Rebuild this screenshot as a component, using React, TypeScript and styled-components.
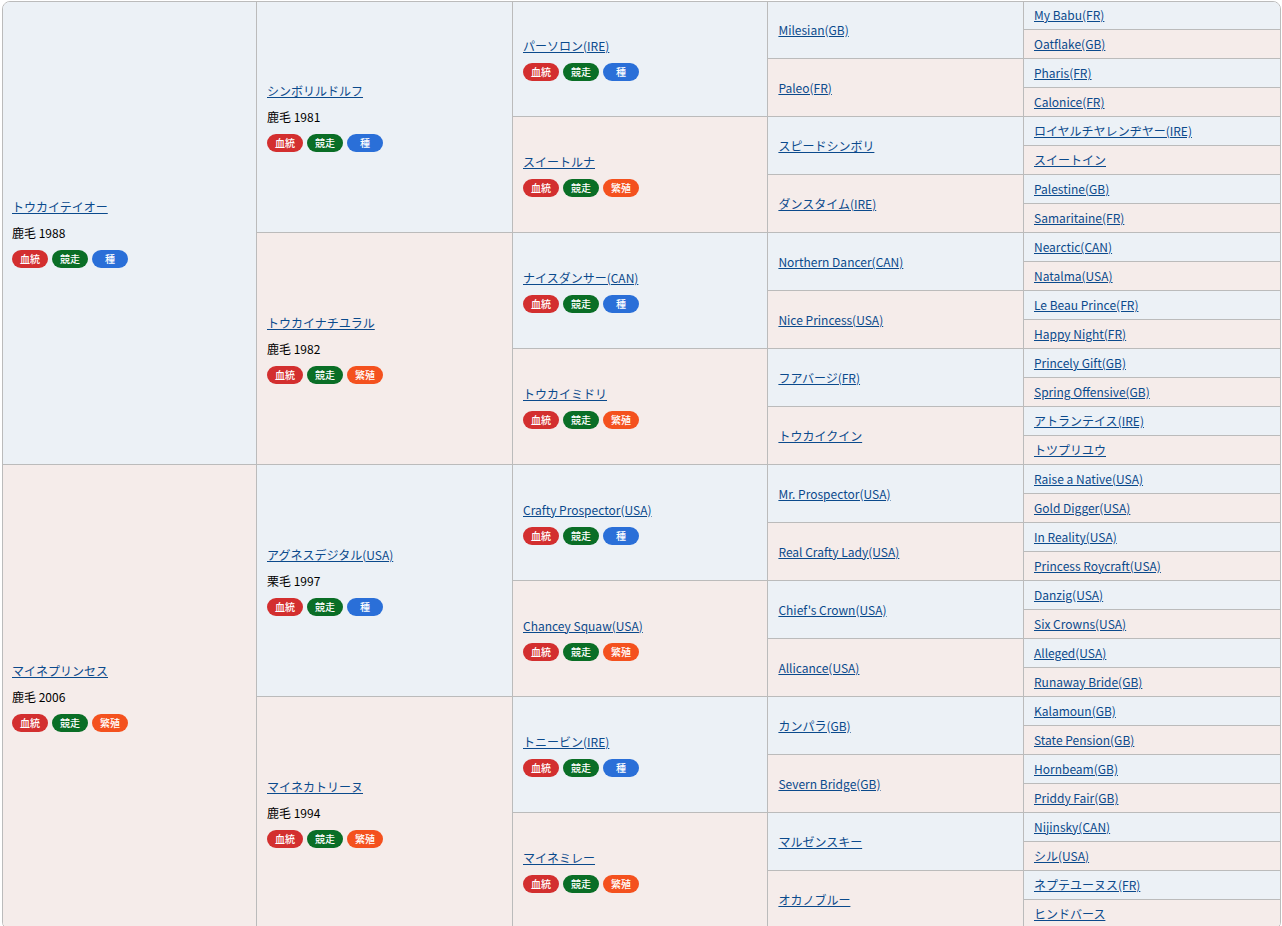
import styled, { createGlobalStyle } from "styled-components";

/* ===========================
   Data
   =========================== */
type Horse = { gen: number; name: string; detail?: string };

const h = (gen: number, name: string, detail?: string): Horse => ({ gen, name, detail });

const HORSES: Horse[] = [
  h(1, "トウカイテイオー", "鹿毛 1988"),
  h(2, "シンボリルドルフ", "鹿毛 1981"),
  h(3, "パーソロン(IRE)"),
  h(4, "Milesian(GB)"),
  h(5, "My Babu(FR)"),
  h(5, "Oatflake(GB)"),
  h(4, "Paleo(FR)"),
  h(5, "Pharis(FR)"),
  h(5, "Calonice(FR)"),
  h(3, "スイートルナ"),
  h(4, "スピードシンボリ"),
  h(5, "ロイヤルチヤレンヂヤー(IRE)"),
  h(5, "スイートイン"),
  h(4, "ダンスタイム(IRE)"),
  h(5, "Palestine(GB)"),
  h(5, "Samaritaine(FR)"),
  h(2, "トウカイナチユラル", "鹿毛 1982"),
  h(3, "ナイスダンサー(CAN)"),
  h(4, "Northern Dancer(CAN)"),
  h(5, "Nearctic(CAN)"),
  h(5, "Natalma(USA)"),
  h(4, "Nice Princess(USA)"),
  h(5, "Le Beau Prince(FR)"),
  h(5, "Happy Night(FR)"),
  h(3, "トウカイミドリ"),
  h(4, "フアバージ(FR)"),
  h(5, "Princely Gift(GB)"),
  h(5, "Spring Offensive(GB)"),
  h(4, "トウカイクイン"),
  h(5, "アトランテイス(IRE)"),
  h(5, "トツプリユウ"),
  h(1, "マイネプリンセス", "鹿毛 2006"),
  h(2, "アグネスデジタル(USA)", "栗毛 1997"),
  h(3, "Crafty Prospector(USA)"),
  h(4, "Mr. Prospector(USA)"),
  h(5, "Raise a Native(USA)"),
  h(5, "Gold Digger(USA)"),
  h(4, "Real Crafty Lady(USA)"),
  h(5, "In Reality(USA)"),
  h(5, "Princess Roycraft(USA)"),
  h(3, "Chancey Squaw(USA)"),
  h(4, "Chief's Crown(USA)"),
  h(5, "Danzig(USA)"),
  h(5, "Six Crowns(USA)"),
  h(4, "Allicance(USA)"),
  h(5, "Alleged(USA)"),
  h(5, "Runaway Bride(GB)"),
  h(2, "マイネカトリーヌ", "鹿毛 1994"),
  h(3, "トニービン(IRE)"),
  h(4, "カンパラ(GB)"),
  h(5, "Kalamoun(GB)"),
  h(5, "State Pension(GB)"),
  h(4, "Severn Bridge(GB)"),
  h(5, "Hornbeam(GB)"),
  h(5, "Priddy Fair(GB)"),
  h(3, "マイネミレー"),
  h(4, "マルゼンスキー"),
  h(5, "Nijinsky(CAN)"),
  h(5, "シル(USA)"),
  h(4, "オカノブルー"),
  h(5, "ネプテユーヌス(FR)"),
  h(5, "ヒンドバース"),
];

/* ===========================
   Styled
   =========================== */
const Global = createGlobalStyle`
  html, body {
    margin: 0;
    overflow: hidden;
    background: #fff;
    font-family: "Noto Sans CJK JP", "Noto Sans", sans-serif;
    font-size: 12px;
    color: #000;
  }
`;

const Frame = styled.div`
  margin: 1px 1px 0 2px;
  height: 927px;
  border: 1px solid #bbb;
  border-radius: 8px;
  overflow: hidden;
`;

const Pedigree = styled.div`
  margin: -2px 0 0 -2px;
  display: grid;
  grid-template-columns: 255px 256px 255.4px 255.6px 1fr;
  grid-template-rows: repeat(32, 29px);
`;

const Cell = styled.div<{ $gen: number; $row: number; $dam: boolean }>`
  grid-column: ${(p) => p.$gen};
  grid-row: ${(p) => p.$row} / span ${(p) => 32 >> p.$gen};
  background: ${(p) => (p.$dam ? "#f5ecea" : "#ecf1f6")};
  border-top: 1px solid #bbb;
  border-left: 1px solid #bbb;
  padding: 0 10px;
  display: flex;
  flex-direction: column;
  justify-content: center;
  align-items: flex-start;
  gap: 8px;
`;

const HorseLink = styled.a`
  color: #0b4a8c;
  line-height: 18px;
  text-decoration: underline;
  cursor: pointer;
`;

const Detail = styled.div`
  line-height: 18px;
`;

const Badges = styled.div`
  display: flex;
  gap: 4px;
`;

const BADGE_COLORS = { red: "#d32f2f", green: "#0a6e26", blue: "#2a6fd8", orange: "#f4511e" };

const Badge = styled.span<{ $color: keyof typeof BADGE_COLORS }>`
  width: 36px;
  height: 18px;
  border-radius: 9px;
  background: ${(p) => BADGE_COLORS[p.$color]};
  color: #fff;
  font-size: 10px;
  font-weight: 500;
  line-height: 18px;
  text-align: center;
`;

/* ===========================
   Component
   =========================== */
export default function App() {
  const seen = [0, 0, 0, 0, 0, 0];

  return (
    <Frame>
      <Global />
      <Pedigree>
        {HORSES.map((horse) => {
          const index = seen[horse.gen]++;
          const span = 32 >> horse.gen;
          const dam = index % 2 === 1;
          return (
            <Cell key={horse.name} $gen={horse.gen} $row={index * span + 1} $dam={dam}>
              <HorseLink>{horse.name}</HorseLink>
              {horse.detail && <Detail>{horse.detail}</Detail>}
              {horse.gen <= 3 && (
                <Badges>
                  <Badge $color="red">血統</Badge>
                  <Badge $color="green">競走</Badge>
                  {dam ? <Badge $color="orange">繁殖</Badge> : <Badge $color="blue">種</Badge>}
                </Badges>
              )}
            </Cell>
          );
        })}
      </Pedigree>
    </Frame>
  );
}
